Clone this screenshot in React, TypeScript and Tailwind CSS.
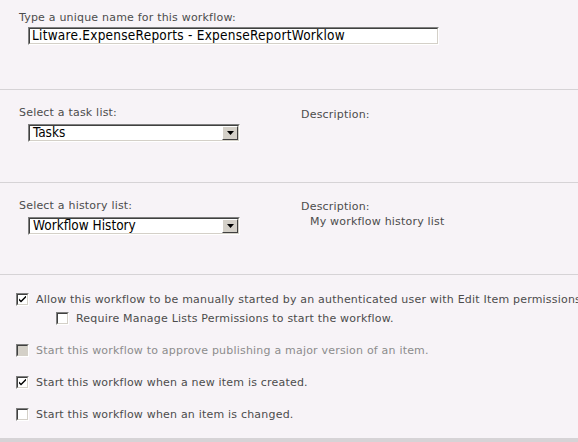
import React from 'react'

const font = { fontFamily: '"DejaVu Sans", Verdana, sans-serif' }
const fieldFont = { fontFamily: '"DejaVu Sans Condensed", "DejaVu Sans", Verdana, sans-serif' }

function Inset({ className, children }: { className?: string; children: React.ReactNode }) {
  return (
    <div className={`border border-t-[#808080] border-l-[#808080] border-b-white border-r-white ${className ?? ''}`}>
      <div className="h-full border border-t-[#404040] border-l-[#404040] border-b-[#d4d0c8] border-r-[#d4d0c8] bg-white flex items-center">
        {children}
      </div>
    </div>
  )
}

function Dropdown({ value }: { value: string }) {
  return (
    <Inset className="ml-[9px] mt-[4px] w-[212px] h-[18px]">
      <span style={fieldFont} className="flex-1 pl-[3px] text-[13.5px] leading-none tracking-normal text-black">
        {value}
      </span>
      <div className="w-[16px] h-[14px] bg-[#d4d0c8] border border-t-white border-l-white border-b-[#404040] border-r-[#404040] flex items-center justify-center">
        <svg width="7" height="4" viewBox="0 0 7 4">
          <path d="M0 0h7L3.5 4z" fill="#000" />
        </svg>
      </div>
    </Inset>
  )
}

function Check({ checked, disabled }: { checked?: boolean; disabled?: boolean }) {
  return (
    <div className="w-[13px] h-[13px] border border-t-[#808080] border-l-[#808080] border-b-white border-r-white shrink-0">
      <div
        className={`w-full h-full border border-t-[#404040] border-l-[#404040] border-b-[#d4d0c8] border-r-[#d4d0c8] flex items-center justify-center ${
          disabled ? 'bg-[#d4d0c8]' : 'bg-white'
        }`}
      >
        {checked && (
          <svg width="7" height="7" viewBox="0 0 7 7">
            <path d="M0 2.5l2 2 5-5v2l-5 5-2-2z" fill="#000" />
          </svg>
        )}
      </div>
    </div>
  )
}

function Option({ label, checked, disabled, indent }: { label: string; checked?: boolean; disabled?: boolean; indent?: boolean }) {
  return (
    <div className={`flex items-center gap-[7px] h-[13px] whitespace-nowrap ${indent ? 'pl-[56px]' : 'pl-[16px]'}`}>
      <Check checked={checked} disabled={disabled} />
      <span className={disabled ? 'text-[#8c8c8c]' : 'text-[#4c4c4c]'}>{label}</span>
    </div>
  )
}

export default function App() {
  return (
    <div
      style={font}
      className="w-[578px] h-[442px] overflow-hidden bg-[#f7f3f7] text-[11px] leading-[14px] tracking-[0.2px] text-[#4c4c4c] flex flex-col"
    >
      <div className="h-[90px] shrink-0 border-b border-[#d6d3d6] pt-[11px] pl-[19px]">
        <div>Type a unique name for this workflow:</div>
        <Inset className="ml-[9px] mt-[2px] w-[411px] h-[18px]">
          <span style={fieldFont} className="pl-[2px] text-[13.5px] leading-none tracking-[0.25px] text-black whitespace-nowrap">
            Litware.ExpenseReports - ExpenseReportWorklow
          </span>
        </Inset>
      </div>

      <div className="h-[93px] shrink-0 border-b border-[#d6d3d6] pt-[16px] flex">
        <div className="w-[301px] pl-[19px]">
          <div>Select a task list:</div>
          <Dropdown value="Tasks" />
        </div>
        <div className="pt-[2px]">Description:</div>
      </div>

      <div className="h-[92px] shrink-0 border-b border-[#d6d3d6] pt-[16px] flex">
        <div className="w-[301px] pl-[19px]">
          <div>Select a history list:</div>
          <Dropdown value="Workflow History" />
        </div>
        <div className="pt-[1px]">
          <div>Description:</div>
          <div className="pl-[9px] pt-[1px]">My workflow history list</div>
        </div>
      </div>

      <div className="flex-1 pt-[18px] flex flex-col">
        <Option checked label="Allow this workflow to be manually started by an authenticated user with Edit Item permissions." />
        <div className="mt-[6px]">
          <Option indent label="Require Manage Lists Permissions to start the workflow." />
        </div>
        <div className="mt-[19px]">
          <Option disabled label="Start this workflow to approve publishing a major version of an item." />
        </div>
        <div className="mt-[19px]">
          <Option checked label="Start this workflow when a new item is created." />
        </div>
        <div className="mt-[19px]">
          <Option label="Start this workflow when an item is changed." />
        </div>
      </div>
      <div className="h-[4px] shrink-0 bg-[#d6d3d6]" />
    </div>
  )
}
